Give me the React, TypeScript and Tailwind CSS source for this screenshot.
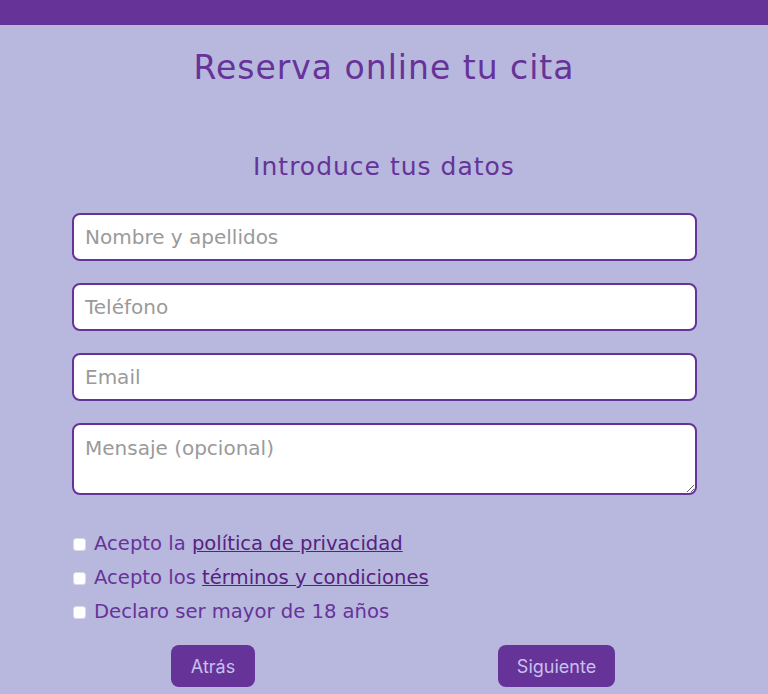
export default function App() {
  const fields = ["Nombre y apellidos", "Teléfono", "Email"];
  return (
    <div className="min-h-[694px] bg-[#b8b8de] font-['DejaVu_Sans',sans-serif] text-[#663399]">
      <div className="h-[25px] bg-[#663399]" />
      <h1 className="mt-[19px] text-center text-[33px] leading-[48px] tracking-[1px]">Reserva online tu cita</h1>
      <h2 className="mt-[51px] text-center text-[25px] leading-[48px] tracking-[1px]">Introduce tus datos</h2>
      <form className="mx-[72px] mt-[22px] flex w-[625px] flex-col">
        <div className="flex flex-col gap-[22px]">
          {fields.map((f) => (
            <input
              key={f}
              type="text"
              placeholder={f}
              className="h-[48px] rounded-[8px] border-2 border-[#663399] bg-white px-[11px] text-[20px] text-[#333] outline-none placeholder:text-[#9a9a9a]"
            />
          ))}
          <textarea
            placeholder="Mensaje (opcional)"
            className="h-[72px] rounded-[8px] border-2 border-[#663399] bg-white px-[11px] pt-[8px] text-[20px] text-[#333] outline-none placeholder:text-[#9a9a9a]"
          />
        </div>
        <div className="mt-[35px] flex flex-col gap-[6px] pl-[1px] text-[19.6px] leading-[28px]">
          <label className="flex items-center gap-[8px]">
            <input type="checkbox" className="h-[13px] w-[13px] appearance-none rounded-[3px] border border-[#d8d8e8] bg-white" />
            <span>
              Acepto la <a href="#" className="text-[#55227f] underline">política de privacidad</a>
            </span>
          </label>
          <label className="flex items-center gap-[8px]">
            <input type="checkbox" className="h-[13px] w-[13px] appearance-none rounded-[3px] border border-[#d8d8e8] bg-white" />
            <span>
              Acepto los <a href="#" className="text-[#55227f] underline">términos y condiciones</a>
            </span>
          </label>
          <label className="flex items-center gap-[8px]">
            <input type="checkbox" className="h-[13px] w-[13px] appearance-none rounded-[3px] border border-[#d8d8e8] bg-white" />
            <span>Declaro ser mayor de 18 años</span>
          </label>
        </div>
        <div className="mt-[19px] flex gap-[243px] pl-[99px] font-['Inter',sans-serif]">
          <button type="button" className="h-[42px] w-[84px] rounded-[8px] bg-[#663399] text-[18px] text-[#c8c0ec]">
            Atrás
          </button>
          <button type="button" className="h-[42px] w-[117px] rounded-[8px] bg-[#663399] text-[18px] text-[#c8c0ec]">
            Siguiente
          </button>
        </div>
      </form>
    </div>
  );
}
